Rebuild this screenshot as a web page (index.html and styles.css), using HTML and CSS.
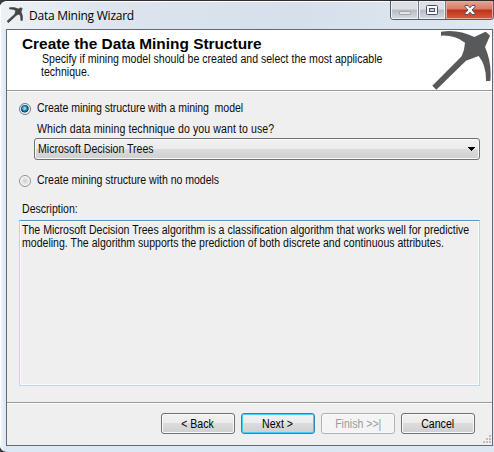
FILE: index.html
```
<!DOCTYPE html>
<html lang="en">
<head>
<meta charset="utf-8">
<title>Data Mining Wizard</title>
<link rel="stylesheet" href="styles.css">
</head>
<body>
<div class="window">
  <div class="titlebar">
    <svg class="app-icon" width="16" height="16" viewBox="153 88 186 184"><path d="M183 96Q235 85 283 110L318 95L330 107L316 141Q340 190 331 243L314 243Q319 195 296 168L262 182L169 269L153 253L245 169L255 129Q225 105 183 110Z"/></svg>
    <span class="caption">Data Mining Wizard</span>
    <div class="controls">
      <span class="ctl min"><svg width="14" height="14"><rect x="1.500" y="8.500" width="11" height="3" rx=".5" fill="#e4e6e9" stroke="#a2a6ad"/></svg></span>
      <span class="ctl max"><svg width="14" height="12"><rect x="1.500" y="1.500" width="11" height="9" rx="1" fill="#fff" stroke="#4b4f61"/><rect x="4.500" y="4.500" width="5" height="3" fill="#c5cad3" stroke="#4b4f61"/></svg></span>
      <span class="ctl close"><svg width="14" height="12"><path d="M2 1.500h3l2 2.300 2-2.300h3v1.200L9 6l3 3.300v1.200H9L7 8.200l-2 2.300H2V9.300L5 6 2 2.700z" fill="#fff" stroke="#565064"/></svg></span>
    </div>
  </div>
  <div class="client">
    <header class="head">
      <div class="head-text">
        <h1>Create the Data Mining Structure</h1>
        <p class="sub"><span class="t">Specify if mining model should be created and select the most applicable</span><br><span class="t outdent">technique.</span></p>
      </div>
      <svg class="pick" width="61" height="60" viewBox="153 90 183 180"><path d="M183 95Q235 87 283 111L313 97Q318 94 321 98L330 107L315 141Q336 188 331 243H318Q319 196 296 168L258 182L169 269L157 257L245 169Q254 148 255 128Q225 105 183 107Z"/></svg>
    </header>
    <main class="body">
      <label class="option"><i class="radio on"></i><span class="t t-model">Create mining structure with a mining  model</span></label>
      <div class="question"><span class="t">Which data mining technique do you want to use?</span></div>
      <div class="combo"><span class="t">Microsoft Decision Trees</span><svg width="7" height="4"><path d="M0 0h7v1H6v1H5v1H4v1H3V3H2V2H1V1H0z"/></svg></div>
      <label class="option second"><i class="radio"></i><span class="t t-none">Create mining structure with no models</span></label>
      <div class="desc-label"><span class="t">Description:</span></div>
      <div class="desc"><span class="t">The Microsoft Decision Trees algorithm is a classification algorithm that works well for predictive<br>modeling. The algorithm supports the prediction of both discrete and continuous attributes.</span></div>
    </main>
    <footer class="foot">
      <span class="btn"><span class="t">&lt; Back</span></span><span class="btn next"><span class="t">Next &gt;</span></span><span class="btn off"><span class="t">Finish &gt;&gt;|</span></span><span class="btn"><span class="t">Cancel</span></span>
      <svg class="grip" width="9" height="9"><path d="M7 0h2v2H7zM4 3h2v2H4zM7 3h2v2H7zM1 6h2v2H1zM4 6h2v2H4zM7 6h2v2H7z"/></svg>
    </footer>
  </div>
</div>
</body>
</html>
```
FILE: styles.css
```
* { box-sizing: border-box; }
body { margin: 0; background: #3b3b40; font: 12px/13px "Liberation Sans", Arial, sans-serif; color: #0c0c0c; }
.window { width: 494px; height: 452px; padding: 0 1px 6px 6px; display: flex; flex-direction: column; overflow: hidden; border-top: 1px solid #2c2c32; border-radius: 7px 0 0 7px; background: linear-gradient(90deg, #f3f7fb 0, #dce8f4 5px, #dce7f3 100%); box-shadow: inset 1px 1px #fff; }
.titlebar { height: 28px; flex: none; display: flex; margin: 0 -1px 0 -6px; padding-left: 7px; border-radius: 7px 0 0; background: linear-gradient(90deg, #eef2f6 0, #dde5ee 20%, #d5e0ec 60%, #e0e8f1 100%); box-shadow: inset 1px 1px #fff; }
.app-icon { margin-top: 6px; fill: #454545; stroke: #454545; stroke-width: 8; }
.caption { margin: 6px 0 0 6px; font: 12px/17px "Open Sans", "Noto Sans", sans-serif; letter-spacing: -.24px; color: #000; white-space: nowrap; }
.controls { display: flex; margin: 0 0 0 auto; width: 104px; height: 19px; border: 1px solid #555a66; border-top: 0; border-radius: 0 0 4px 4px; overflow: hidden; }
.ctl { display: flex; align-items: center; justify-content: center; background: linear-gradient(#dce0e5 0 45%, #b6bcc5 50%, #d5dce4); box-shadow: inset 0 0 0 1px #eef1f5; }
.min { width: 28px; border-right: 1px solid #747984; }
.max { width: 27px; border-right: 1px solid #747984; }
.close { width: 47px; background: linear-gradient(#e5a596 0, #d97963 45%, #bd3219 50%, #d95b3d); box-shadow: inset 0 0 0 1px #eda999; }
.client { flex: 1; display: flex; flex-direction: column; border: 1px solid #646973; background: #efefef; }

/* Body text is a condensed face: regular glyphs narrowed horizontally. */
.t { display: inline-block; white-space: pre; transform: scaleX(.88); transform-origin: 0 50%; }

.head { height: 61px; flex: none; display: flex; justify-content: space-between; background: #fff; border-bottom: 1px solid #999; box-shadow: 0 1px #fff; }
.head-text { width: 400px; padding: 6px 0 0 15px; white-space: nowrap; }
h1 { width: 240px; margin: 0; font-size: 14px; line-height: 17px; color: #000; transform: scaleX(1.1); transform-origin: 0 50%; }
.sub { margin: 0 0 0 20px; }
.outdent { margin-left: -1px; }
.pick { flex: none; fill: #58595b; }
.body { flex: 1; padding: 11px 12px 0; }
.option { display: flex; align-items: center; height: 13px; gap: 6px; }
.t-model { letter-spacing: -.075px; }
.t-none { letter-spacing: -.03px; }
.radio { flex: none; width: 12px; height: 12px; border: 1px solid #8e8f8f; border-radius: 50%; background: radial-gradient(#d0d0d0, #f4f4f4 70%); box-shadow: inset 0 0 0 1px #fafafa; }
.radio.on { background: radial-gradient(circle at 46% 44%, #8ee0f6 0 8%, #2a8fbd 28%, #14334f 48%, #dce7ee 58%, #f5f5f5 70%); border-color: #687a88; }
.question { height: 13px; margin: 8px 0 0 18px; letter-spacing: .1px; }
.combo { margin: 2px 0 0 15px; width: 446px; height: 22px; padding: 0 4px 0 3px; display: flex; align-items: center; justify-content: space-between; border: 1px solid #707070; border-radius: 3px; background: linear-gradient(#f2f2f2 0, #ebebeb 48%, #dcdcdc 50%, #cfcfcf); box-shadow: inset 0 0 0 1px #fafafa; }
.second { margin-top: 14px; }
.desc-label { height: 13px; margin: 16px 0 0 3px; }
.desc { margin: 4px 0 0; width: 461px; height: 166px; padding: 3px 2px; overflow: hidden; border: 1px solid #b5d8ec; border-top-color: #5794bf; box-shadow: inset 0 0 0 1px #fafafa; }
.foot { height: 43px; flex: none; display: flex; gap: 6px; padding: 10px 0 0 154px; border-top: 1px solid #999; box-shadow: inset 0 1px #fff; }
.btn { width: 74px; height: 21px; border: 1px solid #707070; border-radius: 3px; background: linear-gradient(#f2f2f2, #ebebeb 48%, #dcdcdc 50%, #cfcfcf); box-shadow: inset 0 0 0 1px #fafafa; text-align: center; line-height: 20px; color: #000; }
.btn .t { transform-origin: 50% 50%; }
.next { border-color: #3c7fb1; box-shadow: inset 0 0 0 1px #48cdf2; }
.off { border-color: #adb2b5; background: #f4f4f4; color: #9a9a9a; }
.grip { margin: 22px 0 0 1px; fill: #bebebe; }
```
